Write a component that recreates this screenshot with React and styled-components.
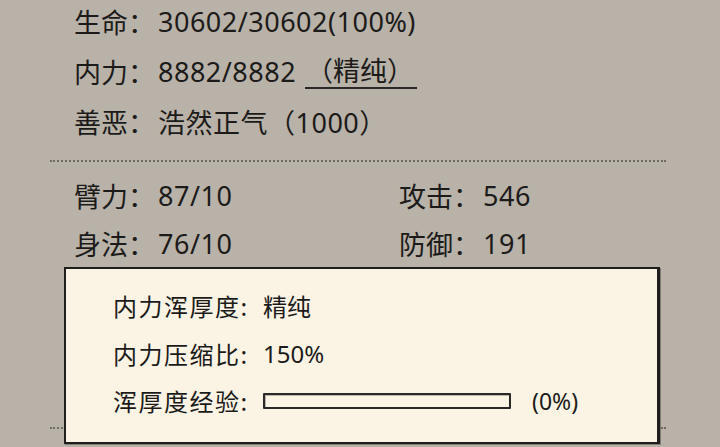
import React from "react";
import styled, { createGlobalStyle } from "styled-components";

const GlobalStyle = createGlobalStyle`
  html, body { margin: 0; padding: 0; }
  body {
    background: #b9b2a8;
    font-family: "Noto Sans", "Noto Sans CJK SC", sans-serif;
    color: #1c1b1a;
  }
`;

const Page = styled.div`
  position: relative;
  width: 720px;
  height: 447px;
  overflow: hidden;
  background: #b9b2a8;
`;

const InfoBlock = styled.div`
  display: flex;
  flex-direction: column;
  padding: 0 0 0 74px;
  margin-top: -3px;
`;

const Row = styled.div`
  display: flex;
  align-items: center;
  height: ${(p) => p.$h || 49}px;
  font-size: 27px;
  white-space: nowrap;
`;

const Label = styled.span`
  font-family: "Noto Sans CJK SC", sans-serif;
`;

const Value = styled.span`
  margin-left: 3px;
  letter-spacing: 0.5px;
`;

const Marked = styled.span`
  margin-left: 9px;
  padding: 0 3px 1px 1px;
  border-bottom: 2px solid #2a2826;
  line-height: 1.2;
  font-family: "Noto Sans CJK SC", sans-serif;
`;

const Divider = styled.div`
  margin: ${(p) => p.$m};
  height: 0;
  width: 616px;
  border-top: 2px dotted #6f6a63;
`;

const StatGrid = styled.div`
  display: grid;
  grid-template-columns: 325px 1fr;
  padding-left: 74px;
`;

const Panel = styled.div`
  position: absolute;
  left: 64px;
  top: 267px;
  width: 596px;
  height: 177px;
  background: #fbf4e5;
  border: 2px solid #1f1e1c;
  border-right-width: 3px;
  box-shadow: 1px 1px 0 rgba(40, 38, 35, 0.4);
  display: flex;
  flex-direction: column;
  padding: 13px 0 0 47px;
  box-sizing: border-box;
`;

const PanelRow = styled.div`
  display: flex;
  align-items: center;
  height: 47.5px;
  font-size: 24px;
  white-space: nowrap;
`;

const PanelLabel = styled.span`
  font-family: "Noto Sans CJK SC", sans-serif;
  letter-spacing: 1.5px;
  width: 150px;
`;

const Bar = styled.div`
  width: 244px;
  height: 12px;
  border: 2px solid #2b2927;
  border-radius: 1px;
  background: #fbf4e5;
  box-shadow: inset 1px 1px 0 rgba(0, 0, 0, 0.25);
`;

const Percent = styled.span`
  margin-left: 21px;
  font-size: 23px;
`;

export default function App() {
  return (
    <Page>
      <GlobalStyle />
      <InfoBlock>
        <Row>
          <Label>生命：</Label>
          <Value>30602/30602(100%)</Value>
        </Row>
        <Row $h={51}>
          <Label>内力：</Label>
          <Value>8882/8882</Value>
          <Marked>（精纯）</Marked>
        </Row>
        <Row>
          <Label>善恶：</Label>
          <Value>
            <Label>浩然正气（</Label>1000<Label>）</Label>
          </Value>
        </Row>
      </InfoBlock>
      <Divider $m="14px 0 9px 50px" />
      <StatGrid>
        <Row $h={48}>
          <Label>臂力：</Label>
          <Value>87/10</Value>
        </Row>
        <Row $h={48}>
          <Label>攻击：</Label>
          <Value>546</Value>
        </Row>
        <Row $h={48}>
          <Label>身法：</Label>
          <Value>76/10</Value>
        </Row>
        <Row $h={48}>
          <Label>防御：</Label>
          <Value>191</Value>
        </Row>
      </StatGrid>
      <Divider $m="160px 0 0 50px" />
      <Panel>
        <PanelRow>
          <PanelLabel>内力浑厚度:</PanelLabel>
          <Label>精纯</Label>
        </PanelRow>
        <PanelRow>
          <PanelLabel>内力压缩比:</PanelLabel>
          <span>150%</span>
        </PanelRow>
        <PanelRow>
          <PanelLabel>浑厚度经验:</PanelLabel>
          <Bar />
          <Percent>(0%)</Percent>
        </PanelRow>
      </Panel>
    </Page>
  );
}
